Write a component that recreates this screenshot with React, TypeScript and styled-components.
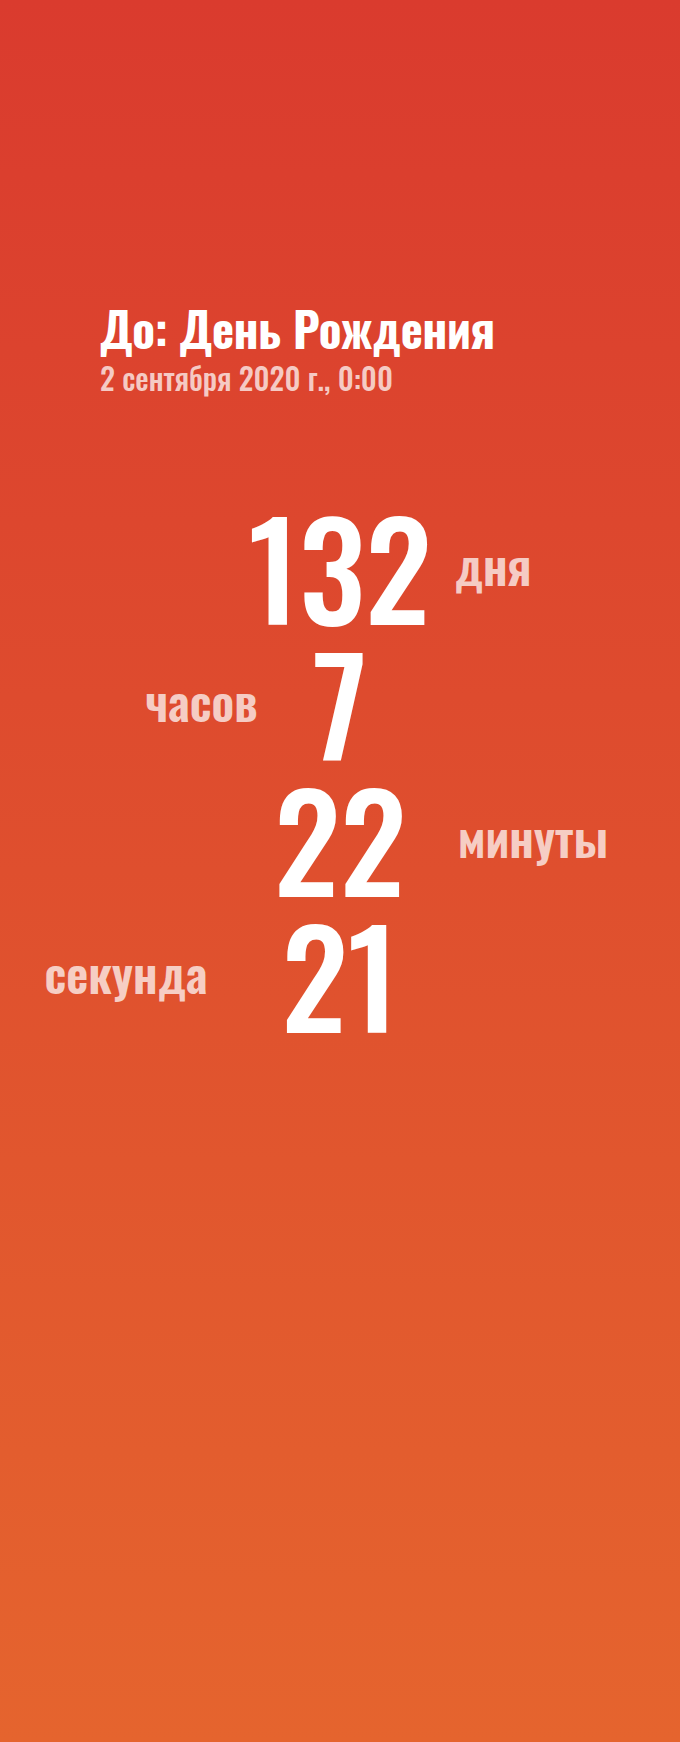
import styled, { createGlobalStyle } from "styled-components";

const Global = createGlobalStyle`
  html, body { margin: 0; padding: 0; }
  body {
    font-family: "Oswald", "Roboto Condensed", "Liberation Sans Narrow", sans-serif;
  }
`;

const Page = styled.main`
  min-height: 1742px;
  box-sizing: border-box;
  padding-top: 298px;
  background: linear-gradient(180deg, #da3b2e 0%, #df4f2e 50%, #e5642e 100%);
  color: #fff;
`;

const Header = styled.header`
  margin-left: 100px;
`;

const Title = styled.h1`
  margin: 0;
  font-size: 47px;
  font-weight: 700;
  line-height: 60px;
  letter-spacing: -0.2px;
`;

const Subtitle = styled.p`
  margin: 0;
  font-size: 30px;
  font-weight: 500;
  line-height: 40px;
  color: rgba(255, 255, 255, 0.72);
`;

const Counter = styled.section`
  margin-top: 99px;
  display: flex;
  flex-direction: column;
`;

const Row = styled.div`
  display: grid;
  grid-template-columns: 1fr auto 1fr;
  align-items: center;
  height: 136px;
`;

const Value = styled.span`
  grid-column: 2;
  font-size: 133px;
  font-weight: 500;
  line-height: 136px;
  text-align: center;
`;

const Unit = styled.span<{ $side: "left" | "right"; $gap: number }>`
  grid-column: ${(p) => (p.$side === "left" ? 1 : 3)};
  grid-row: 1;
  justify-self: ${(p) => (p.$side === "left" ? "end" : "start")};
  margin-left: ${(p) => (p.$side === "right" ? p.$gap : 0)}px;
  margin-right: ${(p) => (p.$side === "left" ? p.$gap : 0)}px;
  font-size: 48px;
  font-weight: 600;
  line-height: 1;
  color: rgba(255, 255, 255, 0.72);
`;

const parts: { value: number; unit: string; side: "left" | "right"; gap: number }[] = [
  { value: 132, unit: "дня", side: "right", gap: 23 },
  { value: 7, unit: "часов", side: "left", gap: 55 },
  { value: 22, unit: "минуты", side: "right", gap: 52 },
  { value: 21, unit: "секунда", side: "left", gap: 74 },
];

export default function App() {
  return (
    <>
      <Global />
      <Page>
        <Header>
          <Title>До: День Рождения</Title>
          <Subtitle>2 сентября 2020 г., 0:00</Subtitle>
        </Header>
        <Counter>
          {parts.map((p) => (
            <Row key={p.unit}>
              <Value>{p.value}</Value>
              <Unit $side={p.side} $gap={p.gap}>
                {p.unit}
              </Unit>
            </Row>
          ))}
        </Counter>
      </Page>
    </>
  );
}
